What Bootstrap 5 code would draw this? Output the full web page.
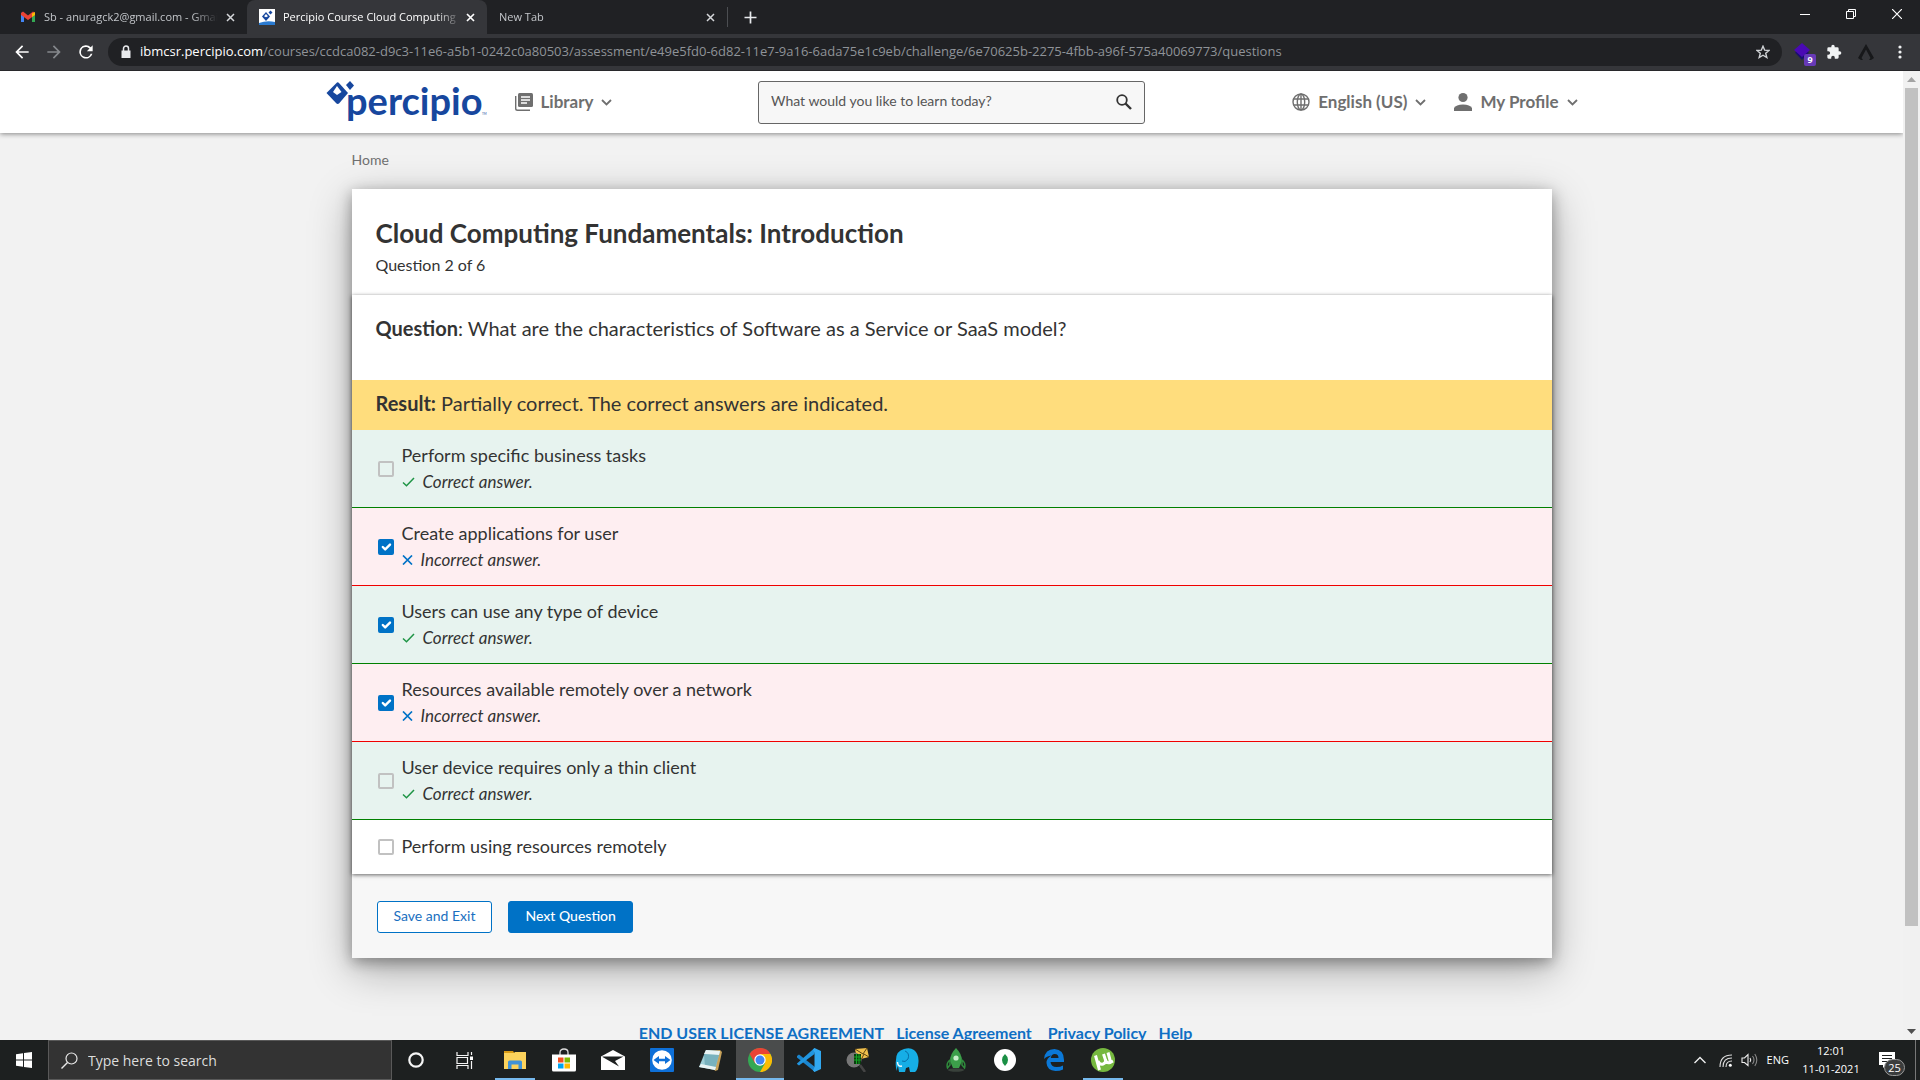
<!DOCTYPE html>
<html lang="en">
<head>
<meta charset="utf-8">
<meta name="viewport" content="width=device-width, initial-scale=1">
<title>Percipio Course Cloud Computing</title>
<link href="https://cdn.jsdelivr.net/npm/bootstrap@5.3.0/dist/css/bootstrap.min.css" rel="stylesheet">
<style>
  :root { --ink: #333; --muted: #6f6f6f; --brand: #0072c6; }
  body { font-family: Lato, sans-serif; color: var(--ink); background: #f2f2f2; line-height: 1.5; }
  svg { display: block; flex: none; }
  button.plain { background: none; border: 0; padding: 0; color: inherit; }
  .sys { font-family: "Open Sans", "Noto Sans", sans-serif; }

  /* browser frame */
  .tabstrip { height: 34px; background: #202124; color: #c3c6ca; font-size: 11px; }
  .browser-tab { width: 240px; height: 34px; }
  .browser-tab.first-tab { width: 247px; }
  .browser-tab .tab-text { overflow: hidden; white-space: nowrap; flex: 1; -webkit-mask-image: linear-gradient(90deg, #000 85%, transparent); }
  .browser-tab.is-open { background: #35363a; color: #fff; border-radius: 8px 8px 0 0; }
  .tab-rule { width: 1px; height: 20px; background: #4c4e52; }
  .win-btn { width: 46px; height: 28px; display: flex; align-items: center; justify-content: center; }
  .toolbar { height: 37px; background: #35363a; border-bottom: 1px solid #28282b; }
  .nav-btns { gap: 12px; margin: 0 12px; }
  .ext-zone { margin: 0 18px 0 12px; }
  .omnibox { height: 28px; border-radius: 14px; background: #202124; }
  .url { font-size: 13px; color: #8f9398; white-space: nowrap; text-decoration: none; }
  .url b { color: #fff; font-weight: 400; }
  .ext-count { right: -6px; bottom: -5px; width: 12px; height: 12px; border-radius: 2px; background: #673ab7; color: #fff; font-size: 9px; line-height: 12px; text-align: center; font-weight: 700; }

  /* site header */
  .site-header { height: 62px; background: #fff; box-shadow: 0 1px 5px rgba(0,0,0,.45); z-index: 2; }
  .header-inner { max-width: 1252px; }
  .side { flex: 1 1 0; }
  .header-inner .menu-btn { font-size: 17px; line-height: 24px; font-weight: 700; color: var(--muted); }
  .search-box { width: 387px; height: 43px; border: 1px solid #666; border-radius: 3px; background: #f7f7f7; }
  .search-box input { border: 0; background: none; outline: 0; font-size: 14px; color: #555; padding-bottom: 4px; }
  .search-box input::placeholder { color: #555; opacity: 1; }

  /* question card */
  .content-wrap { max-width: 1200px; }
  .crumbs { height: 56px; padding-bottom: 2px; }
  .crumb { font-size: 14px; line-height: 20px; color: var(--muted); text-decoration: none; }
  .quiz { background: #f7f7f7; box-shadow: 0 12px 40px rgba(0,0,0,.3), 0 4px 14px rgba(0,0,0,.35); }
  .quiz-head { height: 106px; background: #fff; }
  .quiz-head h1 { font-size: 26px; line-height: 32px; font-weight: 700; }
  .quiz-head p { font-size: 16px; line-height: 24px; }
  .quiz-body { position: relative; background: #fff; box-shadow: 0 1px 4px rgba(0,0,0,.6); }
  .question { height: 85px; font-size: 20px; line-height: 28px; padding: 19px 24px 0; }
  .verdict { height: 50px; background: #ffdd7d; font-size: 20px; line-height: 28px; padding-bottom: 4px; }
  .answer { height: 78px; border-bottom: 1px solid; font-size: 18px; line-height: 26px; padding: 0 26px; }
  .answer label { display: block; line-height: 24px; padding-bottom: 2px; }
  .answer.right { background: #e7f3ef; border-color: #008000; }
  .answer.wrong { background: #feeef1; border-color: #f00000; }
  .answer.neutral { height: 54px; border: 0; }
  .answer .remark { font-size: 17px; font-style: italic; line-height: 26px; }
  .answer .form-check-input { width: 16px; height: 16px; border: 2px solid #c1c1c1; border-radius: 2px; background-color: transparent; }
  .answer .form-check-input:checked { background-color: var(--brand); border-color: var(--brand); background-size: 16px 16px; }
  .quiz-foot { height: 84px; padding: 2px 25px 0; }
  .quiz-foot .btn { height: 32px; font-size: 14px; line-height: 18px; border-radius: 3px; padding: 5px 16px 7px; }
  .btn-save { color: #1a6fc0; background: #fff; border: 1px solid var(--brand); }
  .btn-go { color: #fff; background: var(--brand); border: 1px solid var(--brand); font-weight: 500; }
  .legal { padding-top: 63px; }
  .legal a { font-size: 16px; line-height: 24px; font-weight: 700; color: #0f6fc4; text-decoration: none; }

  /* scrollbar */
  .scroll-rail { width: 17px; background: #f1f1f1; z-index: 3; }
  .scroll-thumb { width: 13px; flex: 0 0 838px; background: #c1c1c1; }

  /* taskbar */
  .taskbar { height: 40px; background: #1d2020; color: #fff; }
  .task-search { width: 344px; border: 1px solid #595959; background: #333; }
  .task-search input { background: none; border: 0; outline: 0; font-size: 14px; color: #ddd; }
  .task-search input::placeholder { color: #ddd; opacity: 1; }
  .task-apps { gap: 1px; margin-left: 3px; }
  .task-btn { width: 48px; height: 40px; display: flex; align-items: center; justify-content: center; }
  .task-btn.running { background: linear-gradient(#76b9ed, #76b9ed) center bottom / 40px 2px no-repeat !important; }
  .task-btn.focused { background: linear-gradient(#76b9ed, #76b9ed) center bottom / 48px 2px no-repeat, #4a4c4c !important; }
  .tray { font-size: 11px; gap: 9px; }
  .clock { line-height: 18px; width: 58px; }
  .notes { margin: 0 11px 0 10px; }
  .note-count { left: 5px; top: 7px; width: 21px; height: 17px; line-height: 15px; border-radius: 9px; border: 1px solid #999; background: #3b3d3d; font-size: 11px; text-align: center; }
  .peek { width: 5px; border-left: 1px solid #777; }
</style>
<script src="https://cdn.jsdelivr.net/npm/bootstrap@5.3.0/dist/js/bootstrap.bundle.min.js"></script>
</head>
<body class="vh-100 d-flex flex-column overflow-hidden">

<div class="tabstrip sys d-flex align-items-center flex-shrink-0">
  <div class="browser-tab first-tab d-flex align-items-center ps-3 pe-2">
    <svg class="ms-1 me-2" width="16" height="12" viewBox="-1 0 16 12"><path d="M0 1.500v9.500h3V4z" fill="#4285f4"/><path d="M14 1.500v9.500h-3V4z" fill="#34a853"/><path d="M0 2l2-1.500 5 4 5-4L14 2v2L7 9 0 4z" fill="#ea4335"/><path d="M11 2.500L14 1v3l-3 2z" fill="#fbbc04"/></svg>
    <span class="tab-text">Sb - anuragck2@gmail.com - Gmail</span>
    <button class="plain ms-2" aria-label="Close tab"><svg class="me-1" width="9" height="9" viewBox="0 0 9 9"><path d="M1 1l7 7M8 1L1 8" stroke="#d5d7da" stroke-width="1.500"/></svg></button>
  </div>
  <div class="browser-tab is-open d-flex align-items-center px-2">
    <svg class="ms-1 me-2" width="16" height="16" viewBox="0 0 16 16"><path fill="#fff" d="M0 0h16v16H0z"/><path d="M0 14q8-3 16-1v3H0z" fill="#2a7ad0"/><path d="M7 3l4 4.500L7 12 3 7.500z" fill="#17479e"/><path d="M7 5l2 2.200-2 1-2-1z" fill="#fff"/><path d="M11.500 1.500l2 2-2 2-2-2z" fill="#17479e"/></svg>
    <span class="tab-text">Percipio Course Cloud Computing</span>
    <button class="plain ms-1" aria-label="Close tab"><svg class="me-1" width="9" height="9" viewBox="0 0 9 9"><path d="M1 1l7 7M8 1L1 8" stroke="#fff" stroke-width="1.700"/></svg></button>
  </div>
  <div class="browser-tab d-flex align-items-center ps-2 pe-2">
    <span class="tab-text ms-1">New Tab</span>
    <button class="plain" aria-label="Close tab"><svg class="me-1" width="9" height="9" viewBox="0 0 9 9"><path d="M1 1l7 7M8 1L1 8" stroke="#d5d7da" stroke-width="1.500"/></svg></button>
  </div>
  <div class="tab-rule"></div>
  <button class="plain ms-3" aria-label="New tab"><svg width="13" height="13" viewBox="0 0 13 13"><path d="M6.500 0.500v12M0.500 6.500h12" stroke="#e8eaed" stroke-width="1.700"/></svg></button>
  <div class="ms-auto d-flex align-self-start">
    <button class="plain win-btn" aria-label="Minimise"><svg width="10" height="10" viewBox="0 0 10 10"><path d="M0 5.500h10" stroke="#fff"/></svg></button>
    <button class="plain win-btn" aria-label="Restore"><svg width="10" height="10" viewBox="0 0 10 10"><path d="M.500 2.500h7v7h-7zM2.500 2.500v-2h7v7h-2" fill="none" stroke="#fff"/></svg></button>
    <button class="plain win-btn" aria-label="Close window"><svg width="10" height="10" viewBox="0 0 10 10"><path d="M0 0l10 10M10 0L0 10" stroke="#fff" stroke-width="1.200"/></svg></button>
  </div>
</div>

<div class="toolbar sys d-flex align-items-center flex-shrink-0">
  <div class="nav-btns d-flex">
    <button class="plain" aria-label="Back"><svg width="20" height="20" viewBox="0 0 24 24"><path d="M20 11H7.800l5.600-5.600L12 4l-8 8 8 8 1.400-1.400L7.800 13H20z" fill="#fff"/></svg></button>
    <button class="plain" aria-label="Forward"><svg width="20" height="20" viewBox="0 0 24 24"><path d="M12 4l-1.400 1.400 5.600 5.600H4v2h12.200l-5.600 5.600L12 20l8-8z" fill="#85888c"/></svg></button>
    <button class="plain" aria-label="Reload"><svg width="20" height="20" viewBox="0 0 24 24"><path d="M17.700 6.300A8 8 0 1 0 19.700 14h-2.100A6 6 0 1 1 12 6c1.700 0 3.100.7 4.200 1.800L13 11h7V4z" fill="#fff"/></svg></button>
  </div>
  <div class="omnibox d-flex align-items-center flex-grow-1 px-2">
    <svg class="ms-1 me-2" width="12" height="14" viewBox="0 0 12 14"><path d="M1.500 5.500h9V13h-9z" fill="#e8eaed"/><path d="M3.500 6V3.500a2.500 2.500 0 0 1 5 0V6" fill="none" stroke="#e8eaed" stroke-width="1.500"/></svg>
    <a class="url" href="#"><b>ibmcsr.percipio.com</b>/courses/ccdca082-d9c3-11e6-a5b1-0242c0a80503/assessment/e49e5fd0-6d82-11e7-9a16-6ada75e1c9eb/challenge/6e70625b-2275-4fbb-a96f-575a40069773/questions</a>
    <button class="plain ms-auto me-1" aria-label="Bookmark"><svg width="14" height="14" viewBox="0 0 14 14"><path d="M7 1.200l1.700 4 4.300.3-3.300 2.800 1.100 4.200L7 10.200l-3.800 2.300 1.100-4.200L1 5.500l4.300-.3z" fill="none" stroke="#d0d3d6" stroke-width="1.400"/></svg></button>
  </div>
  <div class="ext-zone d-flex align-items-center">
    <div class="position-relative me-3"><svg width="16" height="18" viewBox="0 0 16 18"><path d="M1 9.500L8 5l7 4.500L8 17z" fill="#1a0f70"/><path d="M8 0l8 7-8 7-8-7z" fill="#4a09b4"/></svg><span class="ext-count position-absolute">9</span></div>
    <svg class="me-3" width="16" height="16" viewBox="0 0 24 24"><path d="M20.500 11H19V7a2 2 0 0 0-2-2h-4V3.500a2.500 2.500 0 0 0-5 0V5H4a2 2 0 0 0-2 2v3.800h1.500a2.700 2.700 0 0 1 0 5.400H2V20a2 2 0 0 0 2 2h3.800v-1.500a2.700 2.700 0 0 1 5.400 0V22H17a2 2 0 0 0 2-2v-4h1.500a2.500 2.500 0 0 0 0-5z" fill="#f1f3f4"/></svg>
    <svg class="me-4" width="16" height="16" viewBox="0 0 16 16"><path d="M8 0l8 14-3 2h-2l1.500-2L8 5.500 3.500 14 5 16H3L0 14z" fill="#17181a"/></svg>
    <svg width="4" height="14" viewBox="0 0 4 14"><g fill="#f1f3f4"><circle cx="2" cy="2" r="1.600"/><circle cx="2" cy="7" r="1.600"/><circle cx="2" cy="12" r="1.600"/></g></svg>
  </div>
</div>

<div class="d-flex flex-grow-1 overflow-hidden">
  <div class="flex-grow-1 d-flex flex-column overflow-hidden">
    <header class="site-header flex-shrink-0 position-relative">
      <div class="header-inner mx-auto h-100 d-flex align-items-center">
        <div class="side d-flex align-items-center">
          <a href="#" aria-label="Percipio"><svg width="161" height="56" viewBox="0 -7 161 56"><g fill="#17479e"><path d="M11 1.500Q12 1 13 2L22 12 13 22.500Q11.500 23.500 10 22L0.500 12z"/><path d="M20 4l4-4 4 4.500-4 4.500z"/><text x="20" y="34" font-family="Lato, sans-serif" font-size="38" font-weight="700">percipio</text><text x="156" y="34" font-family="Lato, sans-serif" font-size="3">TM</text></g><path d="M11 5l4.500 6L11 14 7 11z" fill="#fff"/></svg></a>
          <button class="plain menu-btn d-flex align-items-center ms-4 ps-1">
            <svg class="me-2" width="18" height="18" viewBox="0 0 18 18"><path d="M4.500 0H16.500Q18 0 18 1.500V12.500Q18 14 16.500 14H4.500Q3 14 3 12.500V1.500Q3 0 4.500 0z" fill="#6f6f6f"/><path d="M6 4h9M6 7h9M6 10h6" stroke="#fff" stroke-width="1.400"/><path d="M.700 3v12.500Q.700 17.300 2.500 17.300H15" fill="none" stroke="#6f6f6f" stroke-width="1.400"/></svg>
            Library
            <svg class="ms-2" width="11" height="7" viewBox="0 0 11 7"><path d="M1 1l4.500 4.500L10 1" fill="none" stroke="#6f6f6f" stroke-width="1.800"/></svg>
          </button>
        </div>
        <form class="search-box d-flex align-items-center px-2">
          <input class="flex-grow-1 ps-1" type="search" aria-label="Search" placeholder="What would you like to learn today?">
          <button class="plain me-1" type="button" aria-label="Search"><svg width="16" height="16" viewBox="0 0 16 16"><circle cx="6" cy="6" r="4.800" fill="none" stroke="#333" stroke-width="1.800"/><path d="M9.500 9.500L15 15" stroke="#333" stroke-width="2.400"/></svg></button>
        </form>
        <div class="side d-flex align-items-center justify-content-end">
          <button class="plain menu-btn d-flex align-items-center me-4 pe-1">
            <svg class="me-2" width="18" height="18" viewBox="0 0 18 18"><g fill="none" stroke="#6f6f6f" stroke-width="1.400"><circle cx="9" cy="9" r="8"/><ellipse cx="9" cy="9" rx="3.700" ry="8"/><path d="M1.500 6h15M1.500 12h15M9 1v16"/></g></svg>
            English (US)
            <svg class="ms-2" width="11" height="7" viewBox="0 0 11 7"><path d="M1 1l4.500 4.500L10 1" fill="none" stroke="#6f6f6f" stroke-width="1.800"/></svg>
          </button>
          <button class="plain menu-btn d-flex align-items-center">
            <svg class="me-2" width="18" height="18" viewBox="0 0 18 18"><g fill="#6f6f6f"><ellipse cx="9" cy="4.500" rx="4.600" ry="4.500"/><path d="M0 18v-3q2-3.500 9-3.500t9 3.500v3z"/></g></svg>
            My Profile
            <svg class="ms-2" width="11" height="7" viewBox="0 0 11 7"><path d="M1 1l4.500 4.500L10 1" fill="none" stroke="#6f6f6f" stroke-width="1.800"/></svg>
          </button>
        </div>
      </div>
    </header>

    <main class="content-wrap w-100 mx-auto">
      <nav class="crumbs d-flex align-items-center" aria-label="Breadcrumb"><a class="crumb" href="#">Home</a></nav>
      <section class="quiz">
        <div class="quiz-head px-4 pt-4">
          <h1 class="mb-1 mt-1">Cloud Computing Fundamentals: Introduction</h1>
          <p class="mb-0">Question 2 of 6</p>
        </div>
        <div class="quiz-body">
          <div class="question"><strong>Question</strong>: What are the characteristics of Software as a Service or SaaS model?</div>
          <div class="verdict d-flex align-items-center px-4"><div><strong>Result:</strong> Partially correct. The correct answers are indicated.</div></div>

          <div class="answer right d-flex align-items-center"><input class="form-check-input m-0 me-2" type="checkbox" id="a1"><div><label for="a1">Perform specific business tasks</label><div class="remark d-flex align-items-center"><svg class="me-2" width="13" height="10" viewBox="0 0 13 10"><path d="M1 5.500l3.500 3.300L12 1" fill="none" stroke="#1e9445" stroke-width="1.500"/></svg>Correct answer.</div></div></div>
          <div class="answer wrong d-flex align-items-center"><input class="form-check-input m-0 me-2" type="checkbox" id="a2" checked><div><label for="a2">Create applications for user</label><div class="remark d-flex align-items-center"><svg class="me-2" width="11" height="10" viewBox="0 0 11 10"><path d="M1 .500l9 9M10 .500l-9 9" fill="none" stroke="#0072c6" stroke-width="1.700"/></svg>Incorrect answer.</div></div></div>
          <div class="answer right d-flex align-items-center"><input class="form-check-input m-0 me-2" type="checkbox" id="a3" checked><div><label for="a3">Users can use any type of device</label><div class="remark d-flex align-items-center"><svg class="me-2" width="13" height="10" viewBox="0 0 13 10"><path d="M1 5.500l3.500 3.300L12 1" fill="none" stroke="#1e9445" stroke-width="1.500"/></svg>Correct answer.</div></div></div>
          <div class="answer wrong d-flex align-items-center"><input class="form-check-input m-0 me-2" type="checkbox" id="a4" checked><div><label for="a4">Resources available remotely over a network</label><div class="remark d-flex align-items-center"><svg class="me-2" width="11" height="10" viewBox="0 0 11 10"><path d="M1 .500l9 9M10 .500l-9 9" fill="none" stroke="#0072c6" stroke-width="1.700"/></svg>Incorrect answer.</div></div></div>
          <div class="answer right d-flex align-items-center"><input class="form-check-input m-0 me-2" type="checkbox" id="a5"><div><label for="a5">User device requires only a thin client</label><div class="remark d-flex align-items-center"><svg class="me-2" width="13" height="10" viewBox="0 0 13 10"><path d="M1 5.500l3.500 3.300L12 1" fill="none" stroke="#1e9445" stroke-width="1.500"/></svg>Correct answer.</div></div></div>
          <div class="answer neutral d-flex align-items-center"><input class="form-check-input m-0 me-2" type="checkbox" id="a6"><label for="a6">Perform using resources remotely</label></div>
        </div>
        <div class="quiz-foot d-flex align-items-center gap-3">
          <button class="btn btn-save">Save and Exit</button>
          <button class="btn btn-go">Next Question</button>
        </div>
      </section>
      <footer class="legal d-flex justify-content-center"><div class="d-flex me-5 pe-4"><a class="me-2 pe-1" href="#">END USER LICENSE AGREEMENT</a><a class="me-3" href="#">License Agreement</a><a class="me-2 pe-1" href="#">Privacy Policy</a><a href="#">Help</a></div></footer>
    </main>
  </div>

  <div class="scroll-rail flex-shrink-0 d-flex flex-column align-items-center">
    <svg width="9" height="17" viewBox="0 0 9 17"><path d="M0 11h9L4.500 6z" fill="#a3a3a3"/></svg>
    <div class="scroll-thumb"></div>
    <svg class="mt-auto" width="9" height="17" viewBox="0 0 9 17"><path d="M0 6h9L4.500 11z" fill="#505050"/></svg>
  </div>
</div>

<div class="taskbar sys d-flex align-items-stretch flex-shrink-0">
  <button class="plain task-btn" aria-label="Start"><svg width="16" height="16" viewBox="0 0 16 16"><path d="M0 2.300L7 1.300V7.500H0zM8 1.100L16 0v7.500H8zM0 8.500h7v6.200l-7-1zM8 8.500h8V16l-8-1.100z" fill="#fff"/></svg></button>
  <div class="task-search d-flex align-items-center ps-2">
    <svg class="ms-1 me-2" width="17" height="17" viewBox="0 0 17 17"><circle cx="10.500" cy="6.500" r="5.500" fill="none" stroke="#e8e8e8" stroke-width="1.200"/><path d="M6.500 10.500L.500 16.500" stroke="#e8e8e8" stroke-width="1.400"/></svg>
    <input class="flex-grow-1" type="text" aria-label="Search Windows" placeholder="Type here to search">
  </div>
  <button class="plain task-btn" aria-label="Cortana"><svg width="16" height="16" viewBox="0 0 16 16"><circle cx="8" cy="8" r="6.700" fill="none" stroke="#f5f5f5" stroke-width="2.200"/></svg></button>
  <button class="plain task-btn" aria-label="Task view"><svg width="17" height="17" viewBox="0 0 17 17"><path d="M1 0v3.500h11V0M1 17v-3.500h11V17M1 5.500h10.500v6H1zM15.500 0v3M15.500 9v8" fill="none" stroke="#f5f5f5" stroke-width="1.200"/><path d="M14 4.500h3v3.500h-3z" fill="#fff"/></svg></button>
  <div class="task-apps d-flex">
  <button class="plain task-btn running" aria-label="File Explorer"><svg width="22" height="18" viewBox="0 0 22 18"><path d="M0 0h9l2 3h-11z" fill="#d99b16"/><path d="M0 2h10l1-1h11v17H0z" fill="#fbd25c"/><path d="M4 18v-7q0-1.500 1.500-1.500h11Q18 9.500 18 11v7h-3.500v-4.500h-7V18z" fill="#3f92d8"/></svg></button>
  <button class="plain task-btn" aria-label="Microsoft Store"><svg width="24" height="24" viewBox="0 0 24 24"><path d="M8 7V4.500q0-3.500 4-3.500t4 3.500V7" fill="none" stroke="#ddd" stroke-width="1.300"/><path d="M0 6.500h24V22q0 1.500-1.500 1.500h-21Q0 23.500 0 22z" fill="#fff"/><path d="M6 9.500h5.500v5H6z" fill="#f25022"/><path d="M12.500 9.500H18v5h-5.500z" fill="#7fba00"/><path d="M6 15.500h5.500v5H6z" fill="#00a4ef"/><path d="M12.500 15.500H18v5h-5.500z" fill="#ffb900"/></svg></button>
  <button class="plain task-btn" aria-label="Mail"><svg width="24" height="20" viewBox="0 0 24 20"><path d="M0 6.500L12 0l12 6.500V20H0z" fill="#fff"/><path d="M1.500 6.500h21L14 11l4 5.500L1.500 7z" fill="#1d2020"/></svg></button>
  <button class="plain task-btn" aria-label="TeamViewer"><svg width="24" height="24" viewBox="0 0 24 24"><rect width="24" height="24" rx="1" fill="#0e70d8"/><circle cx="12" cy="12" r="9.800" fill="#fff"/><path d="M3.500 12L9 8v2.700h6V8l5.500 4-5.500 4v-2.700H9V16z" fill="#0e70d8"/></svg></button>
  <button class="plain task-btn" aria-label="Notepad"><svg width="24" height="24" viewBox="0 0 24 24"><path d="M7 3l14-1 2 2-4 18-3 1z" fill="#c8a25a"/><path d="M7 2l14 1-5 19-16-3z" fill="#9fd0d8"/><path d="M7 2l14 1-1 4L5 6z" fill="#e8f3f4"/><path d="M5 6l15 1-4 14L6 19z" fill="#5f9fae" opacity=".6"/><path d="M0 19l16 3 1-3L2 16z" fill="#e9f4f5"/></svg></button>
  <button class="plain task-btn focused" aria-label="Google Chrome"><svg width="24" height="24" viewBox="0 0 24 24"><circle cx="12" cy="12" r="12" fill="#34a853"/><path d="M12 6h10.400a12 12 0 0 1-10.400 18l5.200-9z" fill="#fbbc05"/><path d="M1.600 6L7 15.200 12 12V6h10.400A12 12 0 0 0 1.600 6z" fill="#ea4335"/><circle cx="12" cy="12" r="5.700" fill="#fff"/><circle cx="12" cy="12" r="4.500" fill="#4285f4"/></svg></button>
  <button class="plain task-btn" aria-label="Visual Studio Code"><svg width="24" height="24" viewBox="0 0 24 24"><path d="M0 8l2-1.500 16 12.500v5L0 9.500z" fill="#1b86cf"/><path d="M0 15.500L17.500 0v6L2 17.500 0 16z" fill="#2196e0"/><path d="M17.500 0L24 3v18l-6.500 3-1.500-1.500 1.500-3.500V5L16 1.500z" fill="#31a8f0"/></svg></button>
  <button class="plain task-btn" aria-label="Mail search"><svg width="24" height="24" viewBox="0 0 24 24"><path d="M9 1l12-1 2 9-12 3z" fill="#f0c04c"/><path d="M9 1l8 5 4-6M15 12l3-6 5 3" fill="none" stroke="#5c4310"/><circle cx="8" cy="12" r="7.500" fill="#777"/><path d="M8 6h7v10H8z" fill="#0a3d0e"/><path d="M8 9h7M8 12h7M10.500 6v10M13 6v10" stroke="#14a825" stroke-width="1"/><path d="M14 17l5 7" stroke="#444" stroke-width="2.500"/></svg></button>
  <button class="plain task-btn" aria-label="Database tool"><svg width="24" height="24" viewBox="0 0 24 24"><path d="M1 12Q1 3 9 1q6-2 10 1 5 4 4.500 12T20 24h-5l-1-5-3 1-1 4H4l-1-6q-1 1-1 5Q0 19 1 12z" fill="#16aee6"/><path d="M10 3q5 2 3 8-3 4-6 2" fill="none" stroke="#0870a8"/><path d="M2.500 14q0 5 4.500 4" fill="none" stroke="#e9f7fc" stroke-width="1.500"/></svg></button>
  <button class="plain task-btn" aria-label="Robo 3T"><svg width="20" height="24" viewBox="0 0 20 24"><ellipse cx="10" cy="22" rx="8" ry="1.800" fill="#39413b"/><path d="M10 0q6 6 6 13l-3 7H7l-3-7Q4 6 10 0z" fill="#3c9f4a"/><path d="M4 12q-4 3-2.500 8L4 17zM16 12q4 3 2.500 8L16 17z" fill="none" stroke="#2f8a3c" stroke-width="1.500"/><circle cx="10" cy="10" r="2.600" fill="#c8efcb"/></svg></button>
  <button class="plain task-btn" aria-label="MongoDB Compass"><svg width="22" height="22" viewBox="0 0 22 22"><circle cx="11" cy="11" r="11" fill="#fff"/><path d="M11 5q3 2.500 3 6t-3 6q-3-2.500-3-6t3-6z" fill="#1a8f44"/></svg></button>
  <button class="plain task-btn" aria-label="Edge"><svg width="22" height="22" viewBox="0 0 22 22"><path d="M1 10Q2 0 11.500 0 21 .5 21 11v2H7.500q.5 5 6 5 4 0 6.500-1.500v4Q17 22 12.500 22 4 21.500 3.500 14q0-5 5-7.500Q3.500 7 1 10zM7.800 9h7.700Q15.500 5 11.700 5 8.500 5 7.800 9z" fill="#0b78d7"/></svg></button>
  <button class="plain task-btn running" aria-label="uTorrent"><svg width="24" height="24" viewBox="0 0 24 24"><circle cx="12" cy="12" r="12" fill="#76b83f"/><path d="M4.500 7.500L8.500 22M7 13q1.500 4 5 3 3-1 2.500-4L12.500 6M14.500 12q1 3.500 4.500 2.500L22 13M19.500 14L17 4.500" fill="none" stroke="#fff" stroke-width="3"/></svg></button>
  </div>

  <div class="tray ms-auto d-flex align-items-center">
    <svg class="me-1" width="12" height="8" viewBox="0 0 12 8"><path d="M.500 7L6 1.500 11.500 7" fill="none" stroke="#eee" stroke-width="1.400"/></svg>
    <svg width="13" height="13" viewBox="0 0 13 13"><g fill="none" stroke="#ddd" stroke-width="1.100"><path d="M1 13Q1 1 13 1M4 13Q4 4 13 4M7 13q0-6 6-6"/></g><circle cx="11.300" cy="11.300" r="1.500" fill="#fff"/></svg>
    <svg width="17" height="14" viewBox="0 0 17 14"><g fill="none" stroke="#eee" stroke-width="1.100"><path d="M1 5h2.500L7 1.500v11L3.500 9.500H1z"/><path d="M9 5q1.500 2 0 4"/><path d="M11.500 3q3 4 0 8M13.800 1q4 6 0 12" stroke="#888"/></g></svg>
    <span class="me-1">ENG</span>
    <div class="clock text-center text-nowrap">12:01<br>11-01-2021</div>
    <div class="notes position-relative"><svg width="16" height="16" viewBox="0 0 16 16"><path d="M0 0h16v13H7l-3 3v-3H0z" fill="#fff"/><path d="M3 3.500h10M3 6.500h10M3 9.500h6" stroke="#1d2020"/></svg><span class="note-count position-absolute">25</span></div>
    <div class="peek align-self-stretch"></div>
  </div>
</div>
</body>
</html>
